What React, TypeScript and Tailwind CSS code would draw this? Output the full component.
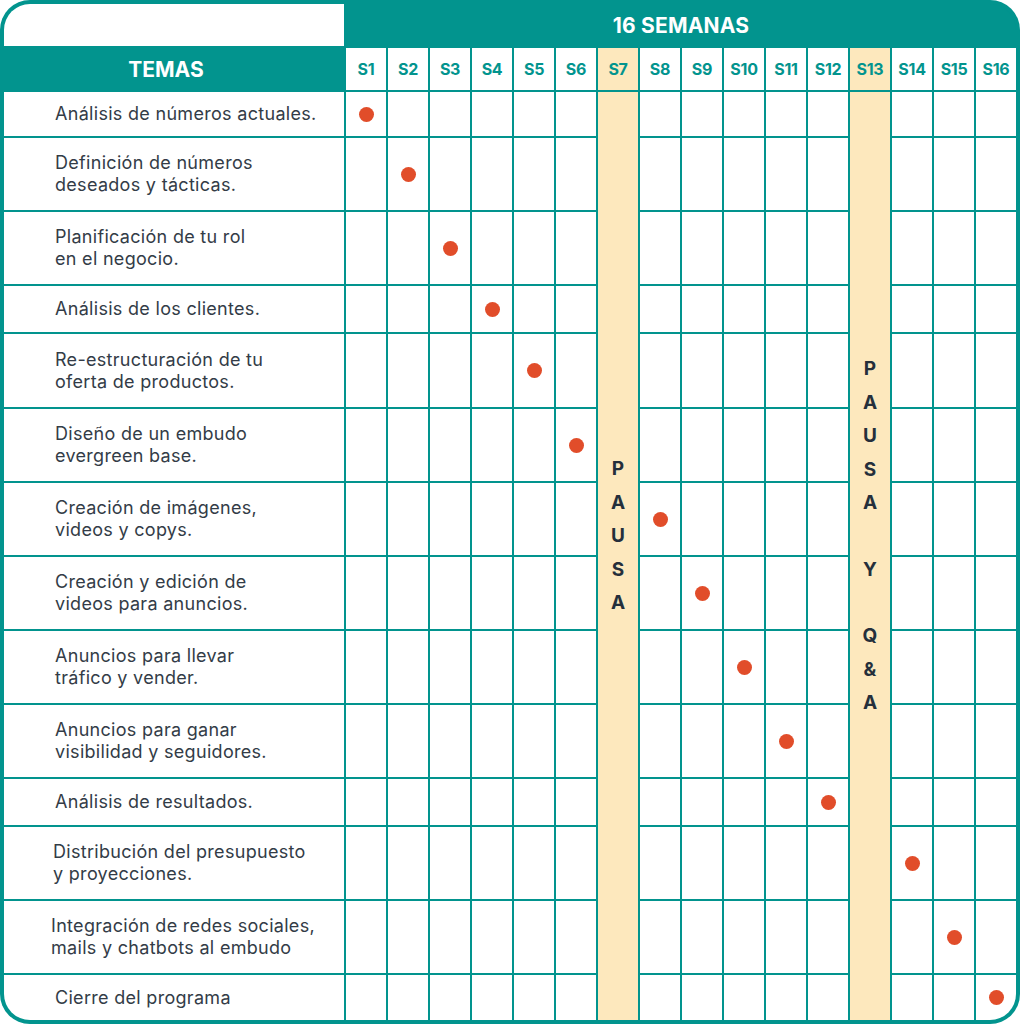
const topics: { text: string[]; week: number; pad: string }[] = [
  { text: ["Análisis de números actuales."], week: 1, pad: "pl-[51px]" },
  { text: ["Definición de números", "deseados y tácticas."], week: 2, pad: "pl-[51px]" },
  { text: ["Planificación de tu rol", "en el negocio."], week: 3, pad: "pl-[51px]" },
  { text: ["Análisis de los clientes."], week: 4, pad: "pl-[51px]" },
  { text: ["Re-estructuración de tu", "oferta de productos."], week: 5, pad: "pl-[51px]" },
  { text: ["Diseño de un embudo", "evergreen base."], week: 6, pad: "pl-[51px]" },
  { text: ["Creación de imágenes,", "videos y copys."], week: 8, pad: "pl-[51px]" },
  { text: ["Creación y edición de", "videos para anuncios."], week: 9, pad: "pl-[51px]" },
  { text: ["Anuncios para llevar", "tráfico y vender."], week: 10, pad: "pl-[51px]" },
  { text: ["Anuncios para ganar", "visibilidad y seguidores."], week: 11, pad: "pl-[51px]" },
  { text: ["Análisis de resultados."], week: 12, pad: "pl-[51px]" },
  { text: ["Distribución del presupuesto", "y proyecciones."], week: 14, pad: "pl-[49px]" },
  { text: ["Integración de redes sociales,", "mails y chatbots al embudo"], week: 15, pad: "pl-[47px]" },
  { text: ["Cierre del programa"], week: 16, pad: "pl-[51px]" },
];

const weeks = Array.from({ length: 16 }, (_, i) => i + 1);
const pauseWeeks = [7, 13];

export default function App() {
  return (
    <div className="w-[1020px] h-[1024px] bg-white" style={{ fontFamily: "Inter, 'Open Sans', sans-serif" }}>
      <div className="w-full h-full rounded-[30px] bg-[#02948e] p-[4px]">
        <div className="w-full h-full rounded-[26px] overflow-hidden grid gap-[2px] bg-[#02948e] grid-cols-[340px_repeat(16,40px)] grid-rows-[42px_42px_44px_72px_72px_46px_73px_72px_72px_72px_72px_72px_46px_72px_72px_45px]">
          {/* Pause columns */}
          <div className="col-start-8 row-start-3 row-span-14 bg-[#fde8bd] flex flex-col items-center justify-center pb-[40px]">
            {["P", "A", "U", "S", "A"].map((l, i) => (
              <span key={i} className="text-[19px] font-bold text-[#252f3b] leading-[33.5px]">{l}</span>
            ))}
          </div>
          <div className="col-start-14 row-start-3 row-span-14 bg-[#fde8bd] flex flex-col items-center justify-center pb-[40px]">
            {["P", "A", "U", "S", "A", "", "Y", "", "Q", "&", "A"].map((l, i) => (
              <span key={i} className="text-[19px] font-bold text-[#252f3b] leading-[33.4px] h-[33.4px]">{l}</span>
            ))}
          </div>

          {/* Header */}
          <div className="bg-white" />
          <div className="col-span-16 flex items-center justify-center text-white font-bold text-[21px] tracking-[0.2px] pt-[2px]">
            16 SEMANAS
          </div>
          <div className="flex items-center justify-center text-white font-bold text-[21px] pt-[2px] pr-[16px]">TEMAS</div>
          {weeks.map((w) => (
            <div
              key={w}
              className={`flex items-center justify-center text-[#02948e] font-bold text-[16px] tracking-[-0.3px] ${
                pauseWeeks.includes(w) ? "bg-[#fde8bd]" : "bg-white"
              }`}
            >
              S{w}
            </div>
          ))}

          {/* Body */}
          {topics.map((t, r) => (
            <>
              <div key={`t${r}`} className={`bg-white flex flex-col justify-center ${t.pad} text-[18px] leading-[22px] text-[#333c47] tracking-[0.3px]`}>
                {t.text.map((line, i) => (
                  <span key={i}>{line}</span>
                ))}
              </div>
              {weeks
                .filter((w) => !pauseWeeks.includes(w))
                .map((w) => (
                  <div key={`c${r}-${w}`} className="bg-white flex items-center justify-center">
                    {t.week === w && <span className="w-[15px] h-[15px] rounded-full bg-[#e14d2a]" />}
                  </div>
                ))}
            </>
          ))}
        </div>
      </div>
    </div>
  );
}
